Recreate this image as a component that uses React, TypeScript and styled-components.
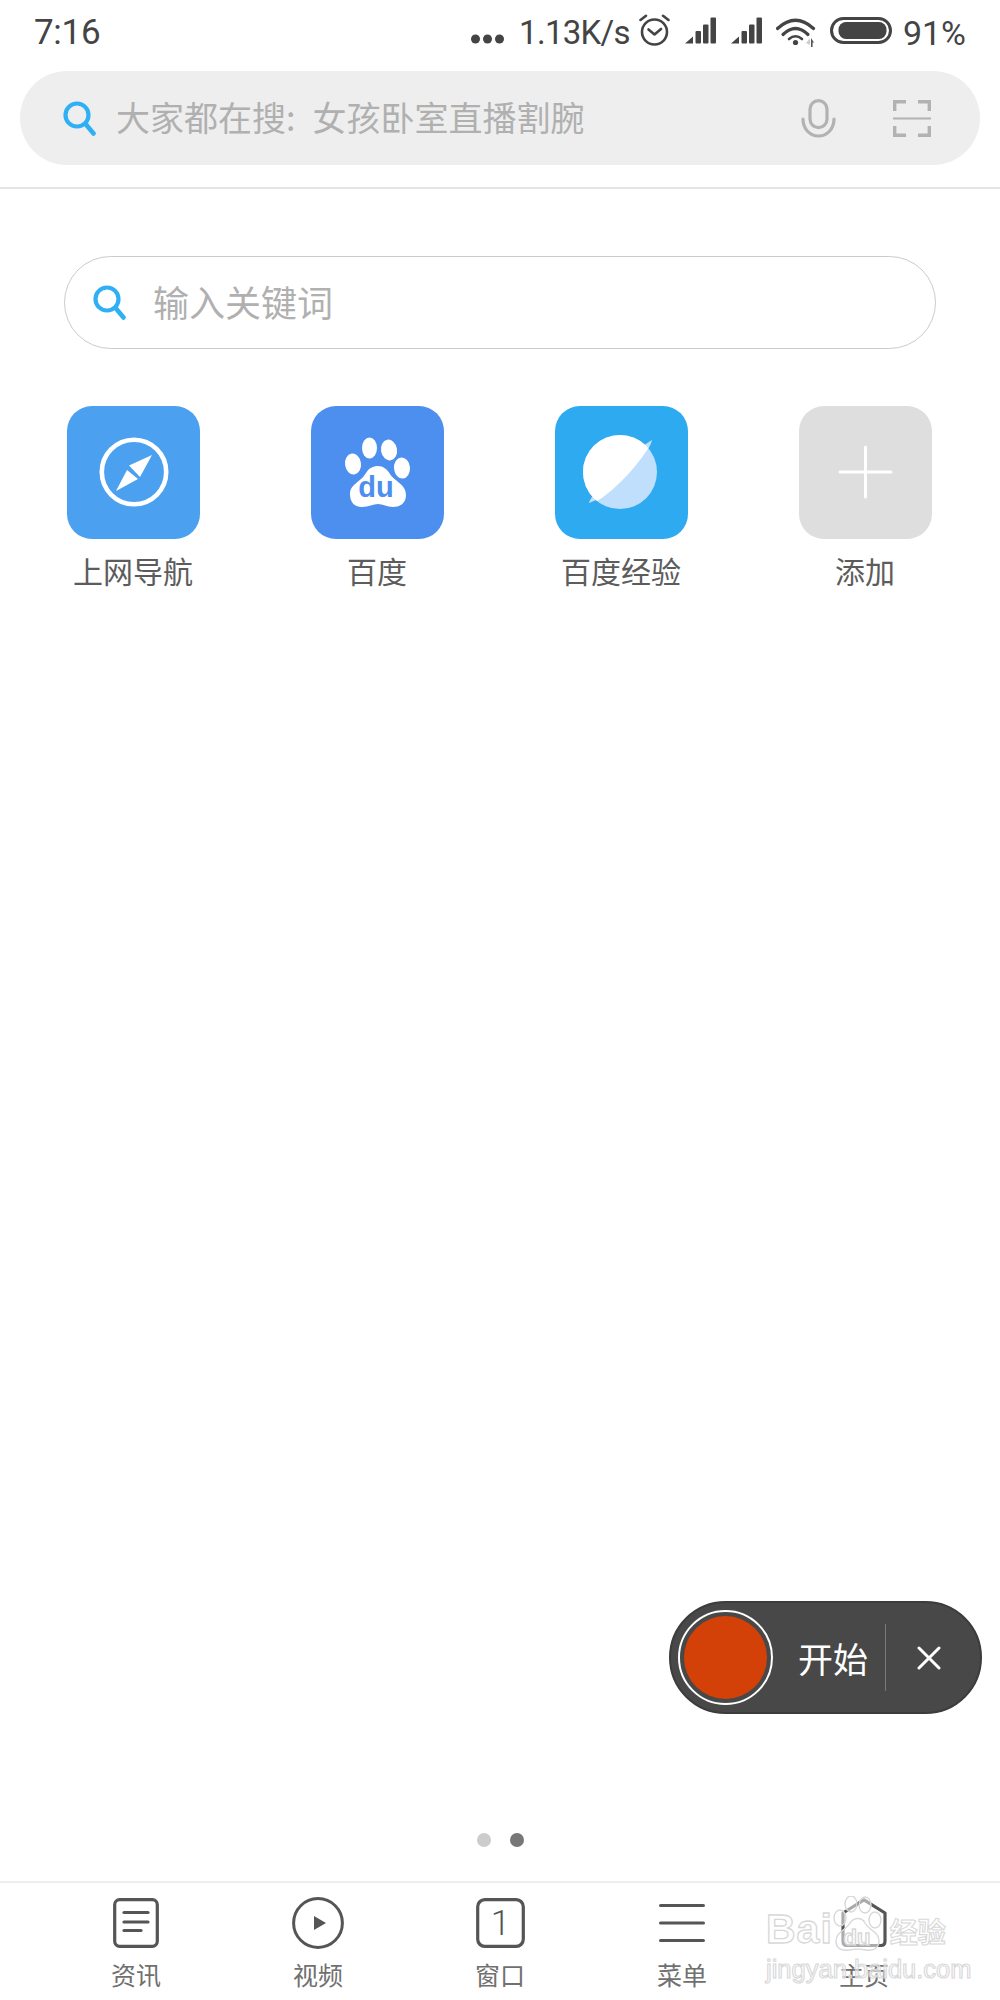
import React from 'react';
import styled, { createGlobalStyle } from 'styled-components';

const CJK = '"Noto Sans CJK SC", "Noto Sans", sans-serif';
const LATIN = 'Roboto, "Noto Sans CJK SC", sans-serif';

const Global = createGlobalStyle`
  html, body { margin: 0; padding: 0; background: #fff; }
  * { box-sizing: border-box; }
`;

const Page = styled.div`
  position: relative;
  width: 1000px;
  height: 2000px;
  display: flex;
  flex-direction: column;
  background: #fff;
  overflow: hidden;
  font-family: ${CJK};
`;

const StatusBar = styled.div`
  height: 71px;
  padding: 15px 34px 0 34px;
  display: flex;
  align-items: flex-start;
  color: #444;
  font-family: ${LATIN};
`;

const Clock = styled.div`
  font-size: 35px;
  line-height: 35px;
  letter-spacing: -0.3px;
  flex: 1;
`;

const StatusSlot = styled.div<{ $ml: number; $mt?: number }>`
  margin-left: ${p => p.$ml}px;
  margin-top: ${p => p.$mt ?? 0}px;
  display: flex;
`;

const StatusText = styled.div<{ $size: number; $track: number }>`
  font-size: ${p => p.$size}px;
  line-height: 36px;
  letter-spacing: ${p => p.$track}px;
  white-space: nowrap;
`;

const TopArea = styled.div`
  padding: 0 20px 22px;
  border-bottom: 2px solid #e4e4e4;
`;

const TopSearch = styled.div`
  height: 94px;
  border-radius: 47px;
  background: #eeeeee;
  display: flex;
  align-items: center;
  padding: 0 49px 0 43px;
`;

const Placeholder = styled.div<{ $size: number; $ml: number }>`
  font-size: ${p => p.$size}px;
  line-height: 1.2;
  margin-left: ${p => p.$ml}px;
  margin-top: -2px;
  color: #b0b0b0;
  flex: 1;
  white-space: nowrap;
`;

const TopActions = styled.div`
  display: flex;
  align-items: center;
  gap: 57px;
`;

const KeywordBox = styled.div`
  margin: 67px 64px 0;
  height: 93px;
  border: 1.5px solid #cbcbcb;
  border-radius: 47px;
  display: flex;
  align-items: center;
  padding: 0 0 0 28px;
`;

const Shortcuts = styled.div`
  margin: 57px 13px 0 11px;
  display: grid;
  grid-template-columns: repeat(4, 1fr);
`;

const Shortcut = styled.div`
  display: flex;
  flex-direction: column;
  align-items: center;
`;

const Tile = styled.div<{ $bg: string }>`
  width: 133px;
  height: 133px;
  border-radius: 25px;
  background: ${p => p.$bg};
  overflow: hidden;
`;

const TileLabel = styled.div`
  margin-top: 11px;
  font-size: 30px;
  line-height: 40px;
  color: #5c5c5c;
`;

const Spacer = styled.div`
  flex: 1;
`;

const PageDots = styled.div`
  display: flex;
  justify-content: center;
  gap: 19px;
  margin-bottom: 34px;
`;

const PageDot = styled.div<{ $on?: boolean }>`
  width: 14px;
  height: 14px;
  border-radius: 50%;
  background: ${p => (p.$on ? '#777' : '#ccc')};
`;

const Nav = styled.div`
  height: 119px;
  border-top: 2px solid #eeeeee;
  padding: 14px 45px 0;
  display: grid;
  grid-template-columns: repeat(5, 1fr);
`;

const NavItem = styled.div`
  display: flex;
  flex-direction: column;
  align-items: center;
`;

const NavIcon = styled.div`
  height: 52px;
  display: flex;
  align-items: center;
  justify-content: center;
`;

const NavLabel = styled.div`
  margin-top: 9px;
  font-size: 25px;
  line-height: 32px;
  color: #707070;
`;

const Recorder = styled.div`
  position: absolute;
  left: 669px;
  top: 1601px;
  width: 313px;
  height: 113px;
  border-radius: 57px;
  background: #484848;
  border: 2px solid #3c3c3c;
  display: flex;
  align-items: center;
  padding-left: 7px;
`;

const RecRing = styled.div`
  width: 95px;
  height: 95px;
  border-radius: 50%;
  border: 2.5px solid #fff;
  display: flex;
  align-items: center;
  justify-content: center;
`;

const RecDot = styled.div`
  width: 83px;
  height: 83px;
  border-radius: 50%;
  background: #d44108;
`;

const RecLabel = styled.div`
  margin-left: 25px;
  font-size: 35px;
  line-height: 40px;
  color: #fff;
`;

const RecDivider = styled.div`
  margin-left: 17px;
  width: 1px;
  height: 67px;
  background: #7a7a7a;
`;

const RecClose = styled.div`
  margin-left: 31px;
  display: flex;
`;

const Watermark = styled.div`
  position: absolute;
  left: 766px;
  top: 1892px;
  width: 190px;
  height: 92px;
  pointer-events: none;
`;

const MarkRow = styled.div`
  display: flex;
  align-items: flex-end;
  height: 60px;
  white-space: nowrap;
`;

const MarkLatin = styled.span`
  font-family: "Liberation Sans", sans-serif;
  font-weight: 700;
  font-size: 41px;
  line-height: 46px;
  letter-spacing: 1px;
  color: rgba(255, 255, 255, 0.5);
  -webkit-text-stroke: 1.3px #d8d8d8;
`;

const MarkCjk = styled.span`
  font-size: 28px;
  line-height: 42px;
  font-weight: 700;
  color: rgba(255, 255, 255, 0.5);
  -webkit-text-stroke: 1.1px #d8d8d8;
`;

const MarkUrl = styled.div`
  font-family: "Liberation Sans", sans-serif;
  font-size: 25.5px;
  line-height: 30px;
  margin-top: 2px;
  color: rgba(255, 255, 255, 0.5);
  -webkit-text-stroke: 1.1px #d8d8d8;
  white-space: nowrap;
`;

const MarkPaw = styled.svg`
  margin: 0 8px 0 -1px;
  flex: none;
`;

const SearchIcon = () => (
  <svg width="33" height="35" viewBox="0 0 33 35" fill="none" stroke="#2fb0f5" strokeLinecap="round">
    <circle cx="14" cy="14" r="11.5" strokeWidth="4.2" />
    <line x1="23" y1="23.5" x2="30.5" y2="32.5" strokeWidth="4.6" />
  </svg>
);

const Alarm = () => (
  <svg width="33" height="32" viewBox="0 0 33 32" fill="none" stroke="#444" strokeWidth="2.6" strokeLinecap="round" strokeLinejoin="round">
    <circle cx="16.5" cy="18" r="12.5" />
    <path d="M10.5 15.5 L16.5 20.5 L23 15" />
    <path d="M2.5 6 L8 1.8 M25 1.8 L30.5 6" />
  </svg>
);

const Signal = () => (
  <svg width="31" height="27" viewBox="0 0 31 27" fill="#444">
    <path d="M0 26.5 L8 19.5 V26.5Z" />
    <rect x="10.5" y="14" width="5.5" height="12.5" rx="1" />
    <rect x="18" y="7.5" width="5.5" height="19" rx="1" />
    <rect x="25.5" y="0.5" width="5.5" height="26" rx="1" />
  </svg>
);

const Wifi = () => (
  <svg width="40" height="30" viewBox="0 0 40 30" fill="none" stroke="#444" strokeWidth="3.2" strokeLinecap="round">
    <path d="M1.5 11.5 Q19.5 -5 37.5 11.5" />
    <path d="M7 17.5 Q19.5 5.5 32 17.5" />
    <path d="M13 22 Q19.5 16.5 26 22" strokeWidth="2.6" />
    <circle cx="19.5" cy="25.5" r="2.6" fill="#444" stroke="none" />
    <path d="M30 26 L34 21.5 V28Z" fill="#ccc" stroke="none" />
    <path d="M35 21 L38 25.5 H36.6 V30 H35Z" fill="#555" stroke="none" />
  </svg>
);

const Battery = () => (
  <svg width="62" height="27" viewBox="0 0 62 27" fill="none">
    <rect x="1.5" y="1.5" width="59" height="24" rx="12" stroke="#444" strokeWidth="3" />
    <rect x="8.5" y="5" width="48" height="17" rx="7.5" fill="#444" />
  </svg>
);

const Mic = () => (
  <svg width="35" height="39" viewBox="0 0 35 39" fill="none" stroke="#b2b2b2" strokeWidth="3.2" strokeLinecap="round">
    <rect x="9" y="1.6" width="17" height="27" rx="8.5" />
    <path d="M2 20 C2 30 9 37 17.5 37 S33 30 33 20" />
  </svg>
);

const Scan = () => (
  <svg width="38" height="37" viewBox="0 0 38 37" fill="none" stroke="#b2b2b2" strokeWidth="3.4">
    <path d="M1.7 11 V1.7 H13 M25 1.7 H36.3 V11" />
    <path d="M1.7 26 V35.3 H13 M25 35.3 H36.3 V26" />
    <line x1="0" y1="18.5" x2="38" y2="18.5" strokeWidth="2" />
  </svg>
);

const Compass = () => (
  <svg width="133" height="133" viewBox="0 0 133 133" fill="#fff">
    <circle cx="67" cy="66" r="32.2" fill="none" stroke="#fff" strokeWidth="4.6" />
    <path d="M85 49 L62 59.5 L73 71Z" />
    <path d="M49 85 L60 64 L71 73Z" />
  </svg>
);

const BaiduPaw = () => (
  <svg width="133" height="133" viewBox="0 0 133 133">
    <g fill="#fff">
      <ellipse cx="42" cy="58" rx="8" ry="10.5" transform="rotate(-8 42 58)" />
      <ellipse cx="58.5" cy="42" rx="7.5" ry="10.5" />
      <ellipse cx="78" cy="44" rx="8" ry="10.5" transform="rotate(-10 78 44)" />
      <ellipse cx="91" cy="62" rx="8" ry="10.5" transform="rotate(-5 91 62)" />
      <path d="M39 88 C39 78 50 76 55 67 C58 62 62 60 67 60 C72 60 76 63 79 68 C83 75 95 78 95 89 C95 98 88 101 82 101 C76 101 72 98 67 98 C62 98 58 101 51 101 C44 101 39 97 39 88Z" />
    </g>
    <text x="65" y="91" textAnchor="middle" fontFamily="Liberation Sans, sans-serif" fontWeight="700" fontSize="29" fill="#4c8fee">du</text>
  </svg>
);

const Planet = () => (
  <svg width="133" height="133" viewBox="0 0 133 133">
    <defs>
      <clipPath id="planet-disc"><circle cx="65" cy="66" r="37" /></clipPath>
    </defs>
    <circle cx="65" cy="66" r="37" fill="#bfdffc" />
    <path d="M97 34 C96 42 70 84 34 97 C33 93 66 52 97 34Z" fill="#bfdffc" />
    <path d="M0 0 H110 L97 36 C86 55 66 80 38 98 L0 110Z" fill="#fff" clipPath="url(#planet-disc)" />
  </svg>
);

const Plus = () => (
  <svg width="133" height="133" viewBox="0 0 133 133" stroke="#fff" strokeWidth="3" strokeLinecap="round">
    <line x1="66.5" y1="41" x2="66.5" y2="91" />
    <line x1="41" y1="66" x2="92" y2="66" />
  </svg>
);

const NewsIcon = () => (
  <svg width="46" height="50" viewBox="0 0 46 50" fill="none" stroke="#555" strokeWidth="3.2" strokeLinecap="round">
    <rect x="1.7" y="1.7" width="42.6" height="46.6" rx="5" />
    <line x1="11" y1="14.5" x2="35" y2="14.5" />
    <line x1="11" y1="24" x2="35" y2="24" />
    <line x1="11" y1="32.5" x2="28" y2="32.5" />
  </svg>
);

const PlayIcon = () => (
  <svg width="52" height="52" viewBox="0 0 52 52" fill="none">
    <circle cx="26" cy="26" r="24.4" stroke="#555" strokeWidth="3" />
    <path d="M22 19 L34 26 L22 33Z" fill="#555" />
  </svg>
);

const WindowIcon = () => (
  <svg width="49" height="50" viewBox="0 0 49 50" fill="none">
    <rect x="1.7" y="1.7" width="45.6" height="46.6" rx="7" stroke="#555" strokeWidth="3.2" />
    <text x="24.5" y="37" textAnchor="middle" fontFamily="Roboto, sans-serif" fontWeight="300" fontSize="35" fill="#555">1</text>
  </svg>
);

const MenuIcon = () => (
  <svg width="46" height="40" viewBox="0 0 46 40" stroke="#555" strokeWidth="3.2" strokeLinecap="round">
    <line x1="1.6" y1="2.5" x2="44.4" y2="2.5" />
    <line x1="1.6" y1="20" x2="44.4" y2="20" />
    <line x1="1.6" y1="37.5" x2="44.4" y2="37.5" />
  </svg>
);

const HomeIcon = () => (
  <svg width="46" height="50" viewBox="0 0 46 50" fill="none" stroke="#555" strokeWidth="3.2" strokeLinejoin="round">
    <path d="M23 1.8 L44 15 V43 C44 46 42.5 47.5 40 47.5 H6 C3.5 47.5 2 46 2 43 V15Z" />
  </svg>
);

const Close = () => (
  <svg width="24" height="24" viewBox="0 0 24 24" stroke="#fff" strokeWidth="3" strokeLinecap="round">
    <line x1="2" y1="2" x2="22" y2="22" />
    <line x1="22" y1="2" x2="2" y2="22" />
  </svg>
);

const PawMark = () => (
  <MarkPaw width="50" height="56" viewBox="0 0 50 56" fill="rgba(255,255,255,0.5)" stroke="#d8d8d8" strokeWidth="1.4">
    <ellipse cx="8" cy="22" rx="6" ry="8" />
    <ellipse cx="19" cy="8" rx="6" ry="8" />
    <ellipse cx="33" cy="9" rx="6" ry="8" />
    <ellipse cx="43" cy="24" rx="6" ry="8" />
    <path d="M4 45 C4 36 14 34 18 27 C22 21 30 21 33 27 C37 34 47 36 47 45 C47 53 40 55 34 54 C29 53 22 53 17 54 C10 55 4 53 4 45Z" />
    <text x="25" y="49" textAnchor="middle" fontFamily="Liberation Sans, sans-serif" fontWeight="700" fontSize="22">du</text>
  </MarkPaw>
);

const tiles = [
  { label: '上网导航', bg: '#4ba0f0', icon: <Compass /> },
  { label: '百度', bg: '#4c8fee', icon: <BaiduPaw /> },
  { label: '百度经验', bg: '#2eaaf1', icon: <Planet /> },
  { label: '添加', bg: '#dedede', icon: <Plus /> },
];

const navs = [
  { label: '资讯', icon: <NewsIcon /> },
  { label: '视频', icon: <PlayIcon /> },
  { label: '窗口', icon: <WindowIcon /> },
  { label: '菜单', icon: <MenuIcon /> },
  { label: '主页', icon: <HomeIcon /> },
];

export default function App() {
  return (
    <Page>
      <Global />
      <StatusBar>
        <Clock>7:16</Clock>
        <StatusSlot $ml={0} $mt={19}>
          <svg width="33" height="10" viewBox="0 0 33 10" fill="#444">
            <circle cx="4.5" cy="5" r="4.5" />
            <circle cx="16.5" cy="5" r="4.5" />
            <circle cx="28.5" cy="5" r="4.5" />
          </svg>
        </StatusSlot>
        <StatusSlot $ml={15} $mt={0}><StatusText $size={33} $track={-0.7}>1.13K/s</StatusText></StatusSlot>
        <StatusSlot $ml={8} $mt={-1}><Alarm /></StatusSlot>
        <StatusSlot $ml={14} $mt={2}><Signal /></StatusSlot>
        <StatusSlot $ml={15} $mt={2}><Signal /></StatusSlot>
        <StatusSlot $ml={14} $mt={2}><Wifi /></StatusSlot>
        <StatusSlot $ml={14} $mt={2}><Battery /></StatusSlot>
        <StatusSlot $ml={11} $mt={0}><StatusText $size={34} $track={0}>91%</StatusText></StatusSlot>
      </StatusBar>
      <TopArea>
        <TopSearch>
          <SearchIcon />
          <Placeholder $size={34} $ml={20}>大家都在搜:{'\u2002'}女孩卧室直播割腕</Placeholder>
          <TopActions>
            <Mic />
            <Scan />
          </TopActions>
        </TopSearch>
      </TopArea>
      <KeywordBox>
        <SearchIcon />
        <Placeholder $size={36} $ml={27}>输入关键词</Placeholder>
      </KeywordBox>
      <Shortcuts>
        {tiles.map(t => (
          <Shortcut key={t.label}>
            <Tile $bg={t.bg}>{t.icon}</Tile>
            <TileLabel>{t.label}</TileLabel>
          </Shortcut>
        ))}
      </Shortcuts>
      <Spacer />
      <PageDots>
        <PageDot />
        <PageDot $on />
      </PageDots>
      <Nav>
        {navs.map(n => (
          <NavItem key={n.label}>
            <NavIcon>{n.icon}</NavIcon>
            <NavLabel>{n.label}</NavLabel>
          </NavItem>
        ))}
      </Nav>
      <Recorder>
        <RecRing><RecDot /></RecRing>
        <RecLabel>开始</RecLabel>
        <RecDivider />
        <RecClose><Close /></RecClose>
      </Recorder>
      <Watermark>
        <MarkRow>
          <MarkLatin>Bai</MarkLatin>
          <PawMark />
          <MarkCjk>经验</MarkCjk>
        </MarkRow>
        <MarkUrl>jingyan.baidu.com</MarkUrl>
      </Watermark>
    </Page>
  );
}
